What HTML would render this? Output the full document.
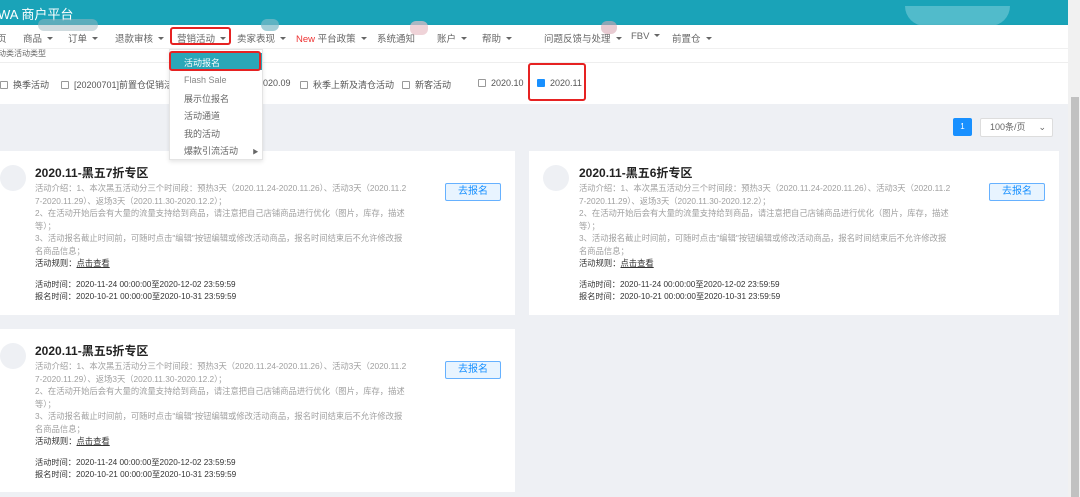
<!DOCTYPE html>
<html><head><meta charset="utf-8"><style>
*{margin:0;padding:0;box-sizing:border-box}
body{width:1080px;height:497px;overflow:hidden;background:#eef0f4;font-family:"Liberation Sans","Noto Sans CJK SC",sans-serif;position:relative;color:#333}
.hdr{position:absolute;left:0;top:0;width:1080px;height:25px;background:#1aa3b8;color:#fff;font-size:13px;padding:4px 0 0 0}
.nav{position:absolute;left:0;top:25px;width:1068px;height:23px;background:#fff;box-shadow:0 1px 3px rgba(0,0,0,.12);font-size:9.5px;color:#666}
.nav span{position:absolute;top:6px;white-space:nowrap}
.tri{display:inline-block;border-left:3px solid transparent;border-right:3px solid transparent;border-top:3px solid #666;margin-left:5px;vertical-align:2px}
.strip{position:absolute;left:0;top:48px;width:1068px;height:56px;background:#fff;border-top:1px solid #f0f0f0}
.filters{position:absolute;top:78px;font-size:9px;color:#555;white-space:nowrap}
.cb{display:inline-block;width:8px;height:8px;border:1px solid #999;border-radius:1px;margin-right:5px;vertical-align:-1px;background:#fff}
.red{position:absolute;border:2px solid #e62222;border-radius:3px}
.card{position:absolute;background:#fff}
.av{position:absolute;left:0;top:14px;width:26px;height:26px;border-radius:50%;background:#eef0f4}
.ttl{position:absolute;left:35px;top:13px;font-size:12px;font-weight:bold;color:#222}
.desc{position:absolute;left:35px;top:31px;width:374px;font-size:8.3px;line-height:12.5px;color:#a0a0a0;word-break:break-all}
.dk{color:#333}
.btn{position:absolute;top:32px;width:56px;height:18px;border:1px solid #66b1ff;background:#e8f4ff;color:#1890ff;font-size:10px;text-align:center;line-height:16px;border-radius:2px}
.time{position:absolute;left:35px;font-size:8.2px;line-height:12px;color:#333}
.menu{position:absolute;left:169px;top:49px;width:94px;height:111px;background:#fff;border:1px solid #e4e4e4;box-shadow:0 2px 4px rgba(0,0,0,.1);font-size:9px;color:#888}
.menu div{position:absolute;left:14px}
</style></head><body>
<div class="hdr"><span style="margin-left:-2px">WA 商户平台</span>
<div style="position:absolute;left:905px;top:6px;width:105px;height:20px;background:#5fc0cf;border-radius:0 0 30px 30px;opacity:.8"></div></div>
<div class="nav">
<span style="left:-3px">页</span>
<span style="left:23px">商品<i class="tri"></i></span>
<span style="left:68px">订单<i class="tri"></i></span>
<span style="left:115px">退款审核<i class="tri"></i></span>
<span style="left:177px">营销活动<i class="tri"></i></span>
<span style="left:237px">卖家表现<i class="tri"></i></span>
<span style="left:296px"><b style="font-weight:normal;color:#e33">New</b> 平台政策<i class="tri"></i></span>
<span style="left:377px">系统通知</span>
<span style="left:437px">账户<i class="tri"></i></span>
<span style="left:482px">帮助<i class="tri"></i></span>
<span style="left:544px">问题反馈与处理<i class="tri"></i></span>
<span style="left:631px">FBV<i class="tri"></i></span>
<span style="left:672px">前置仓<i class="tri"></i></span>
<div style="position:absolute;left:38px;top:-6px;width:60px;height:12px;background:#9fb8c0;opacity:.5;border-radius:6px"></div>
<div style="position:absolute;left:261px;top:-6px;width:18px;height:12px;background:#7cbac8;border-radius:8px;opacity:.7"></div>
<div style="position:absolute;left:410px;top:-4px;width:18px;height:14px;background:#e8c0c8;border-radius:6px;opacity:.7"></div>
<div style="position:absolute;left:601px;top:-4px;width:16px;height:13px;background:#d8a8b4;border-radius:6px;opacity:.6"></div>
</div>
<div class="red" style="left:170px;top:27px;width:61px;height:18px"></div>
<div class="strip">
<div style="position:absolute;left:-2px;top:-1px;font-size:8px;color:#666">动类活动类型</div>
<div style="position:absolute;left:0;top:13px;width:1068px;border-top:1px solid #eee"></div>
</div>
<div class="filters" style="left:0"><i class="cb"></i>换季活动</div>
<div class="filters" style="left:61px"><i class="cb"></i>[20200701]前置仓促销活动</div>
<div class="filters" style="left:258px">2020.09</div>
<div class="filters" style="left:300px"><i class="cb"></i>秋季上新及清仓活动</div>
<div class="filters" style="left:402px"><i class="cb"></i>新客活动</div>
<div class="filters" style="left:478px"><i class="cb"></i>2020.10</div>
<div class="filters" style="left:537px"><i class="cb" style="background:#1890ff;border-color:#1890ff"></i>2020.11</div>
<div class="red" style="left:528px;top:63px;width:58px;height:38px"></div>
<div style="position:absolute;left:953px;top:118px;width:19px;height:18px;background:#1890ff;border-radius:2px;color:#fff;font-size:8px;text-align:center;line-height:18px">1</div>
<div style="position:absolute;left:980px;top:118px;width:73px;height:19px;background:#fff;border:1px solid #ddd;border-radius:2px;font-size:9px;color:#666;line-height:17px;padding-left:9px">100条/页<span style="position:absolute;right:6px;top:0">⌄</span></div>

<div class="card" style="left:0;top:151px;width:515px;height:164px">
<div class="av"></div><div class="ttl">2020.11-黑五7折专区</div>
<div class="desc">活动介绍：1、本次黑五活动分三个时间段：预热3天（2020.11.24-2020.11.26）、活动3天（2020.11.27-2020.11.29）、返场3天（2020.11.30-2020.12.2）；<br>2、在活动开始后会有大量的流量支持给到商品，请注意把自己店铺商品进行优化（图片，库存，描述等）；<br>3、活动报名截止时间前，可随时点击"编辑"按钮编辑或修改活动商品，报名时间结束后不允许修改报名商品信息；<br><span class="dk">活动规则：<u>点击查看</u></span></div>
<div class="btn" style="left:445px">去报名</div>
<div class="time" style="top:128px">活动时间：2020-11-24 00:00:00至2020-12-02 23:59:59<br>报名时间：2020-10-21 00:00:00至2020-10-31 23:59:59</div>
</div>
<div class="card" style="left:529px;top:151px;width:530px;height:164px">
<div class="av" style="left:14px"></div><div class="ttl" style="left:50px">2020.11-黑五6折专区</div>
<div class="desc" style="left:50px">活动介绍：1、本次黑五活动分三个时间段：预热3天（2020.11.24-2020.11.26）、活动3天（2020.11.27-2020.11.29）、返场3天（2020.11.30-2020.12.2）；<br>2、在活动开始后会有大量的流量支持给到商品，请注意把自己店铺商品进行优化（图片，库存，描述等）；<br>3、活动报名截止时间前，可随时点击"编辑"按钮编辑或修改活动商品，报名时间结束后不允许修改报名商品信息；<br><span class="dk">活动规则：<u>点击查看</u></span></div>
<div class="btn" style="left:460px">去报名</div>
<div class="time" style="left:50px;top:128px">活动时间：2020-11-24 00:00:00至2020-12-02 23:59:59<br>报名时间：2020-10-21 00:00:00至2020-10-31 23:59:59</div>
</div>
<div class="card" style="left:0;top:329px;width:515px;height:163px">
<div class="av"></div><div class="ttl">2020.11-黑五5折专区</div>
<div class="desc">活动介绍：1、本次黑五活动分三个时间段：预热3天（2020.11.24-2020.11.26）、活动3天（2020.11.27-2020.11.29）、返场3天（2020.11.30-2020.12.2）；<br>2、在活动开始后会有大量的流量支持给到商品，请注意把自己店铺商品进行优化（图片，库存，描述等）；<br>3、活动报名截止时间前，可随时点击"编辑"按钮编辑或修改活动商品，报名时间结束后不允许修改报名商品信息；<br><span class="dk">活动规则：<u>点击查看</u></span></div>
<div class="btn" style="left:445px">去报名</div>
<div class="time" style="top:128px">活动时间：2020-11-24 00:00:00至2020-12-02 23:59:59<br>报名时间：2020-10-21 00:00:00至2020-10-31 23:59:59</div>
</div>

<div class="menu">
<div style="left:0;top:3px;width:92px;height:17px;background:#2aa7b8;color:#fff;padding:3px 0 0 14px">活动报名</div>
<div style="top:25px">Flash Sale</div>
<div style="top:42px;color:#666">展示位报名</div>
<div style="top:59px;color:#666">活动通道</div>
<div style="top:77px;color:#666">我的活动</div>
<div style="top:94px;color:#666">爆款引流活动 <span style="margin-left:12px;font-size:6px">▶</span></div>
</div>
<div class="red" style="left:169px;top:51px;width:92px;height:20px"></div>

<div style="position:absolute;left:1068px;top:0;width:12px;height:497px;background:#f1f1f1"></div>
<div style="position:absolute;left:1071px;top:97px;width:8px;height:400px;background:#c1c1c1"></div>
</body></html>
